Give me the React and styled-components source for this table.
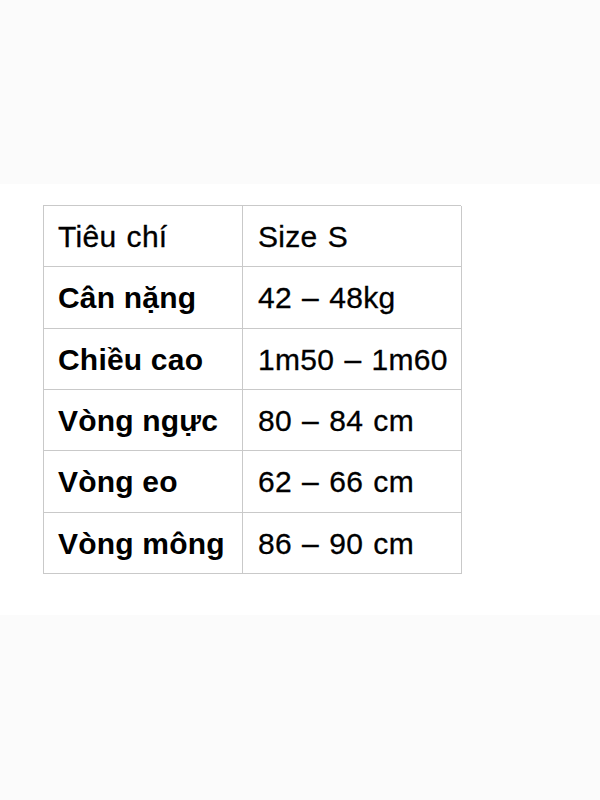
import { Fragment } from "react";
import styled, { createGlobalStyle } from "styled-components";

const GlobalStyle = createGlobalStyle`
  html, body {
    margin: 0;
    padding: 0;
    background: #fbfbfb;
  }
  * {
    box-sizing: border-box;
  }
`;

const Page = styled.div`
  width: 600px;
  height: 800px;
  display: flex;
  flex-direction: column;
  font-family: "Liberation Sans", Arial, sans-serif;
`;

const Band = styled.div`
  height: ${({ $h }) => $h}px;
  background: #fbfbfb;
  flex-shrink: 0;
`;

const Sheet = styled.div`
  height: 431px;
  background: #ffffff;
  padding: 21px 0 0 43px;
  flex-shrink: 0;
`;

const Grid = styled.div`
  display: grid;
  grid-template-columns: 199px 219px;
  grid-auto-rows: 61.33px;
  width: 418px;
  border-top: 1px solid #c9c9c9;
  border-left: 1px solid #c9c9c9;
`;

const Cell = styled.div`
  display: flex;
  align-items: center;
  padding-left: ${({ $label }) => ($label ? 14 : 15)}px;
  padding-top: 2px;
  border-right: 1px solid #c9c9c9;
  border-bottom: 1px solid #c9c9c9;
  font-size: 30px;
  letter-spacing: ${({ $bold }) => ($bold ? "0.2px" : "0.3px")};
  word-spacing: ${({ $bold }) => ($bold ? "0" : "1.5px")};
  font-weight: ${({ $bold }) => ($bold ? 700 : 400)};
  -webkit-text-stroke: ${({ $bold }) => ($bold ? "0" : "0.3px")} #000;
  color: #000000;
  white-space: nowrap;
`;

const rows = [
  ["Cân nặng", "42 – 48kg"],
  ["Chiều cao", "1m50 – 1m60"],
  ["Vòng ngực", "80 – 84 cm"],
  ["Vòng eo", "62 – 66 cm"],
  ["Vòng mông", "86 – 90 cm"],
];

export default function App() {
  return (
    <>
      <GlobalStyle />
      <Page>
        <Band $h={184} />
        <Sheet>
          <Grid>
            <Cell $label>Tiêu chí</Cell>
            <Cell>Size S</Cell>
            {rows.map(([label, value]) => (
              <Fragment key={label}>
                <Cell $label $bold>
                  {label}
                </Cell>
                <Cell>{value}</Cell>
              </Fragment>
            ))}
          </Grid>
        </Sheet>
        <Band $h={185} />
      </Page>
    </>
  );
}
